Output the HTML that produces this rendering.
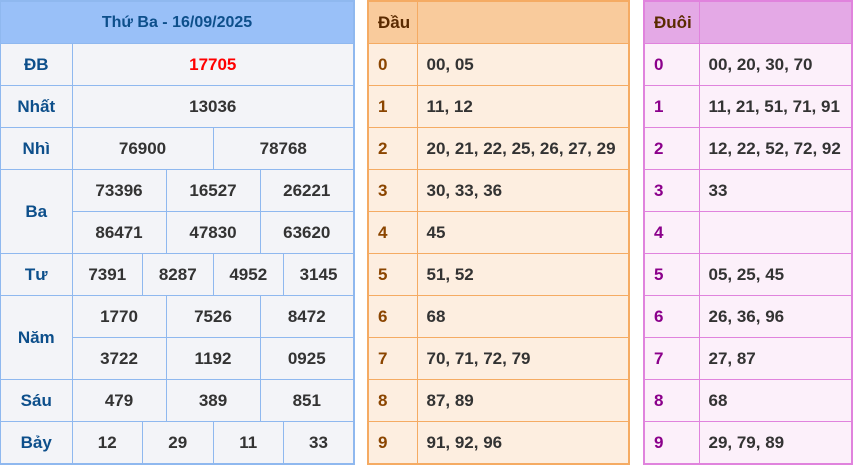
<!DOCTYPE html>
<html><head><meta charset="utf-8"><style>
body{margin:0;width:853px;height:466px;background:#fff;overflow:hidden;position:relative;font-family:"Liberation Sans",Arial,sans-serif;font-weight:bold;font-size:17px;color:#333}
table{position:absolute;top:0;border-collapse:collapse;table-layout:fixed}
td{height:41px;padding:0;white-space:nowrap}
#L{left:-1px;width:356px;border:2px solid #8fb8ef}
#L td{border:1px solid #8fb8ef;background:#f3f4f8;text-align:center}
#L td.h{background:#99c0f8;color:#0d4f8b;font-size:16px}
#L td.l{color:#0d4f8b}
#O{left:367px;width:263px;border:2px solid #f5ab63}
#O td{border:1px solid #f5ab63;background:#fdeee0;padding-left:9px}
#O td.h{background:#f9cb9c;color:#5a2a00}
#O td.d{color:#8b4500}
#P{left:643px;width:210px;border:2px solid #e083dd}
#P td{border:1px solid #e083dd;background:#fcf0fa;padding-left:9px}
#P td.h{background:#e4a9e6;color:#5a2a00}
#P td.d{color:#8b008b}
</style></head><body>
<table id="L"><colgroup><col style="width:72px"><col><col><col><col><col><col><col><col><col><col><col><col></colgroup>
<tr><td class="h" colspan="13">Thứ Ba - 16/09/2025</td></tr>
<tr><td class="l">ĐB</td><td colspan="12" style="color:#f00">17705</td></tr>
<tr><td class="l">Nhất</td><td colspan="12">13036</td></tr>
<tr><td class="l">Nhì</td><td colspan="6">76900</td><td colspan="6">78768</td></tr>
<tr><td class="l" rowspan="2">Ba</td><td colspan="4">73396</td><td colspan="4">16527</td><td colspan="4">26221</td></tr>
<tr><td colspan="4">86471</td><td colspan="4">47830</td><td colspan="4">63620</td></tr>
<tr><td class="l">Tư</td><td colspan="3">7391</td><td colspan="3">8287</td><td colspan="3">4952</td><td colspan="3">3145</td></tr>
<tr><td class="l" rowspan="2">Năm</td><td colspan="4">1770</td><td colspan="4">7526</td><td colspan="4">8472</td></tr>
<tr><td colspan="4">3722</td><td colspan="4">1192</td><td colspan="4">0925</td></tr>
<tr><td class="l">Sáu</td><td colspan="4">479</td><td colspan="4">389</td><td colspan="4">851</td></tr>
<tr><td class="l">Bảy</td><td colspan="3">12</td><td colspan="3">29</td><td colspan="3">11</td><td colspan="3">33</td></tr>
</table>
<table id="O"><colgroup><col style="width:49px"><col></colgroup>
<tr><td class="h">Đầu</td><td class="h"></td></tr>
<tr><td class="d">0</td><td>00, 05</td></tr>
<tr><td class="d">1</td><td>11, 12</td></tr>
<tr><td class="d">2</td><td>20, 21, 22, 25, 26, 27, 29</td></tr>
<tr><td class="d">3</td><td>30, 33, 36</td></tr>
<tr><td class="d">4</td><td>45</td></tr>
<tr><td class="d">5</td><td>51, 52</td></tr>
<tr><td class="d">6</td><td>68</td></tr>
<tr><td class="d">7</td><td>70, 71, 72, 79</td></tr>
<tr><td class="d">8</td><td>87, 89</td></tr>
<tr><td class="d">9</td><td>91, 92, 96</td></tr>
</table>
<table id="P"><colgroup><col style="width:55px"><col></colgroup>
<tr><td class="h">Đuôi</td><td class="h"></td></tr>
<tr><td class="d">0</td><td>00, 20, 30, 70</td></tr>
<tr><td class="d">1</td><td>11, 21, 51, 71, 91</td></tr>
<tr><td class="d">2</td><td>12, 22, 52, 72, 92</td></tr>
<tr><td class="d">3</td><td>33</td></tr>
<tr><td class="d">4</td><td></td></tr>
<tr><td class="d">5</td><td>05, 25, 45</td></tr>
<tr><td class="d">6</td><td>26, 36, 96</td></tr>
<tr><td class="d">7</td><td>27, 87</td></tr>
<tr><td class="d">8</td><td>68</td></tr>
<tr><td class="d">9</td><td>29, 79, 89</td></tr>
</table>
</body></html>
